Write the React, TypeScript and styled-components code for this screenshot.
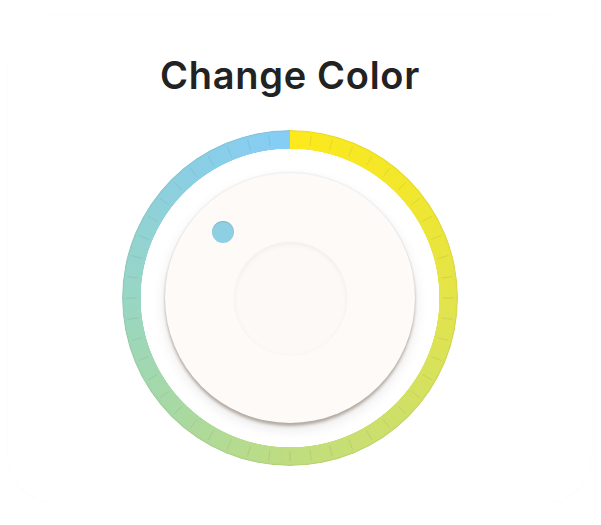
import React from "react";
import styled, { createGlobalStyle } from "styled-components";

const Global = createGlobalStyle`
  html, body { margin: 0; padding: 0; background: #ffffff; }
  body { font-family: Inter, "Noto Sans", sans-serif; }
`;

const Card = styled.div`
  margin: 15px 9px 0 8px;
  height: 488px;
  border-radius: 50px;
  background: #ffffff;
  box-shadow: 0 0 0 1px rgba(0, 0, 0, 0.006), 0 4px 10px rgba(0, 0, 0, 0.008);
  display: flex;
  flex-direction: column;
  align-items: center;
  padding-right: 20px;
  box-sizing: border-box;
`;

const Title = styled.h1`
  margin: 35px 0 0 0;
  font-family: Inter, "Noto Sans", sans-serif;
  font-weight: 600;
  font-size: 38px;
  line-height: 50px;
  letter-spacing: 0.7px;
  color: #222222;
`;

const Dial = styled.div`
  position: relative;
  margin-top: 30px;
  width: 336px;
  height: 336px;
  display: grid;
  place-items: center;
`;

const RingBand = styled.div`
  position: absolute;
  inset: 0;
  border-radius: 50%;
  background: conic-gradient(
    from 0deg,
    #fde91c 0deg,
    #f2e72c 45deg,
    #e3e44a 90deg,
    #d0e066 135deg,
    #bfdd80 180deg,
    #a8d9a2 225deg,
    #98d6c4 270deg,
    #8ccfe0 315deg,
    #85cdf6 359.9deg
  );
  box-shadow: inset 0 0 2px rgba(90, 90, 40, 0.35);
  -webkit-mask: radial-gradient(circle, transparent 149px, #000 149.5px);
  mask: radial-gradient(circle, transparent 149px, #000 149.5px);
`;

const Ticks = styled.svg`
  position: absolute;
  inset: 0;
  pointer-events: none;
`;

const Knob = styled.div`
  position: relative;
  width: 250px;
  height: 250px;
  border-radius: 50%;
  background: #fdfaf8;
  box-shadow:
    0 -1px 2px rgba(0, 0, 0, 0.06),
    0 3px 3px rgba(110, 90, 70, 0.45),
    0 6px 14px rgba(0, 0, 0, 0.1);
  display: grid;
  place-items: center;
`;

const Well = styled.div`
  width: 113px;
  height: 113px;
  border-radius: 50%;
  background: #fcf9f7;
  box-shadow:
    inset 0 2px 5px rgba(0, 0, 0, 0.05),
    0 0 2px rgba(0, 0, 0, 0.04);
`;

const Dot = styled.div`
  position: absolute;
  left: 47px;
  top: 48px;
  width: 22px;
  height: 22px;
  border-radius: 50%;
  background: #8ecfe3;
  box-shadow: inset 0 1px 1px rgba(0, 0, 0, 0.12);
`;

const TICK_COUNT = 48;

export default function App() {
  const ticks = Array.from({ length: TICK_COUNT }, (_, i) => {
    const a = (i * 360) / TICK_COUNT;
    const rad = (a * Math.PI) / 180;
    const r1 = 153;
    const r2 = 164;
    return {
      x1: 168 + r1 * Math.sin(rad),
      y1: 168 - r1 * Math.cos(rad),
      x2: 168 + r2 * Math.sin(rad),
      y2: 168 - r2 * Math.cos(rad),
      skip: i === 0,
    };
  });
  return (
    <>
      <Global />
      <Card>
        <Title>Change Color</Title>
        <Dial>
          <RingBand />
          <Ticks width="336" height="336" viewBox="0 0 336 336">
            {ticks
              .filter((t) => !t.skip)
              .map((t, i) => (
                <line
                  key={i}
                  x1={t.x1}
                  y1={t.y1}
                  x2={t.x2}
                  y2={t.y2}
                  stroke="rgba(60,80,60,0.14)"
                  strokeWidth="0.8"
                />
              ))}
          </Ticks>
          <Knob>
            <Well />
            <Dot />
          </Knob>
        </Dial>
      </Card>
    </>
  );
}
